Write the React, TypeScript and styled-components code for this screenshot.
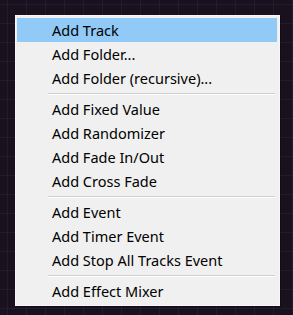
import React from 'react'
import styled, { createGlobalStyle } from 'styled-components'

const GlobalStyle = createGlobalStyle`
  html, body {
    margin: 0;
    padding: 0;
    background: #19111e;
  }
`

const Canvas = styled.div`
  width: 293px;
  height: 315px;
  box-sizing: border-box;
  padding: 15px 13px 0 15px;
  background-color: #19111e;
  background-image:
    linear-gradient(90deg, rgba(60, 50, 80, 0.3) 1px, transparent 1px),
    linear-gradient(0deg, rgba(60, 50, 80, 0.3) 1px, transparent 1px);
  background-size: 19px 19px;
  background-position: 7px 5px;
  font-family: 'Noto Sans', 'Open Sans', sans-serif;
`

const Menu = styled.div`
  width: 265px;
  box-sizing: border-box;
  background: #f0f0f0;
  border: 1px solid #f7f7f7;
  padding: 2px 2px 2px 1px;
  display: flex;
  flex-direction: column;
  box-shadow: 1px 1px 0 rgba(0, 0, 0, 0.25);
`

const Item = styled.div<{ $active?: boolean }>`
  height: 24px;
  display: flex;
  align-items: center;
  padding-left: 35px;
  font-size: 14.5px;
  color: #000;
  background: ${({ $active }) => ($active ? '#91c9f7' : 'transparent')};
  white-space: nowrap;
`

const Separator = styled.div`
  height: 7px;
  display: flex;
  flex-direction: column;
  justify-content: center;
  padding: 0 2px 0 31px;

  &::before {
    content: '';
    height: 1px;
    background: #d0d0d0;
  }
  &::after {
    content: '';
    height: 1px;
    background: #ffffff;
  }
`

const groups = [
  ['Add Track', 'Add Folder...', 'Add Folder (recursive)...'],
  ['Add Fixed Value', 'Add Randomizer', 'Add Fade In/Out', 'Add Cross Fade'],
  ['Add Event', 'Add Timer Event', 'Add Stop All Tracks Event'],
  ['Add Effect Mixer'],
]

export default function App() {
  return (
    <>
      <GlobalStyle />
      <Canvas>
        <Menu>
          {groups.map((items, gi) => (
            <React.Fragment key={gi}>
              {gi > 0 && <Separator />}
              {items.map((label) => (
                <Item key={label} $active={label === 'Add Track'}>
                  {label}
                </Item>
              ))}
            </React.Fragment>
          ))}
        </Menu>
      </Canvas>
    </>
  )
}
